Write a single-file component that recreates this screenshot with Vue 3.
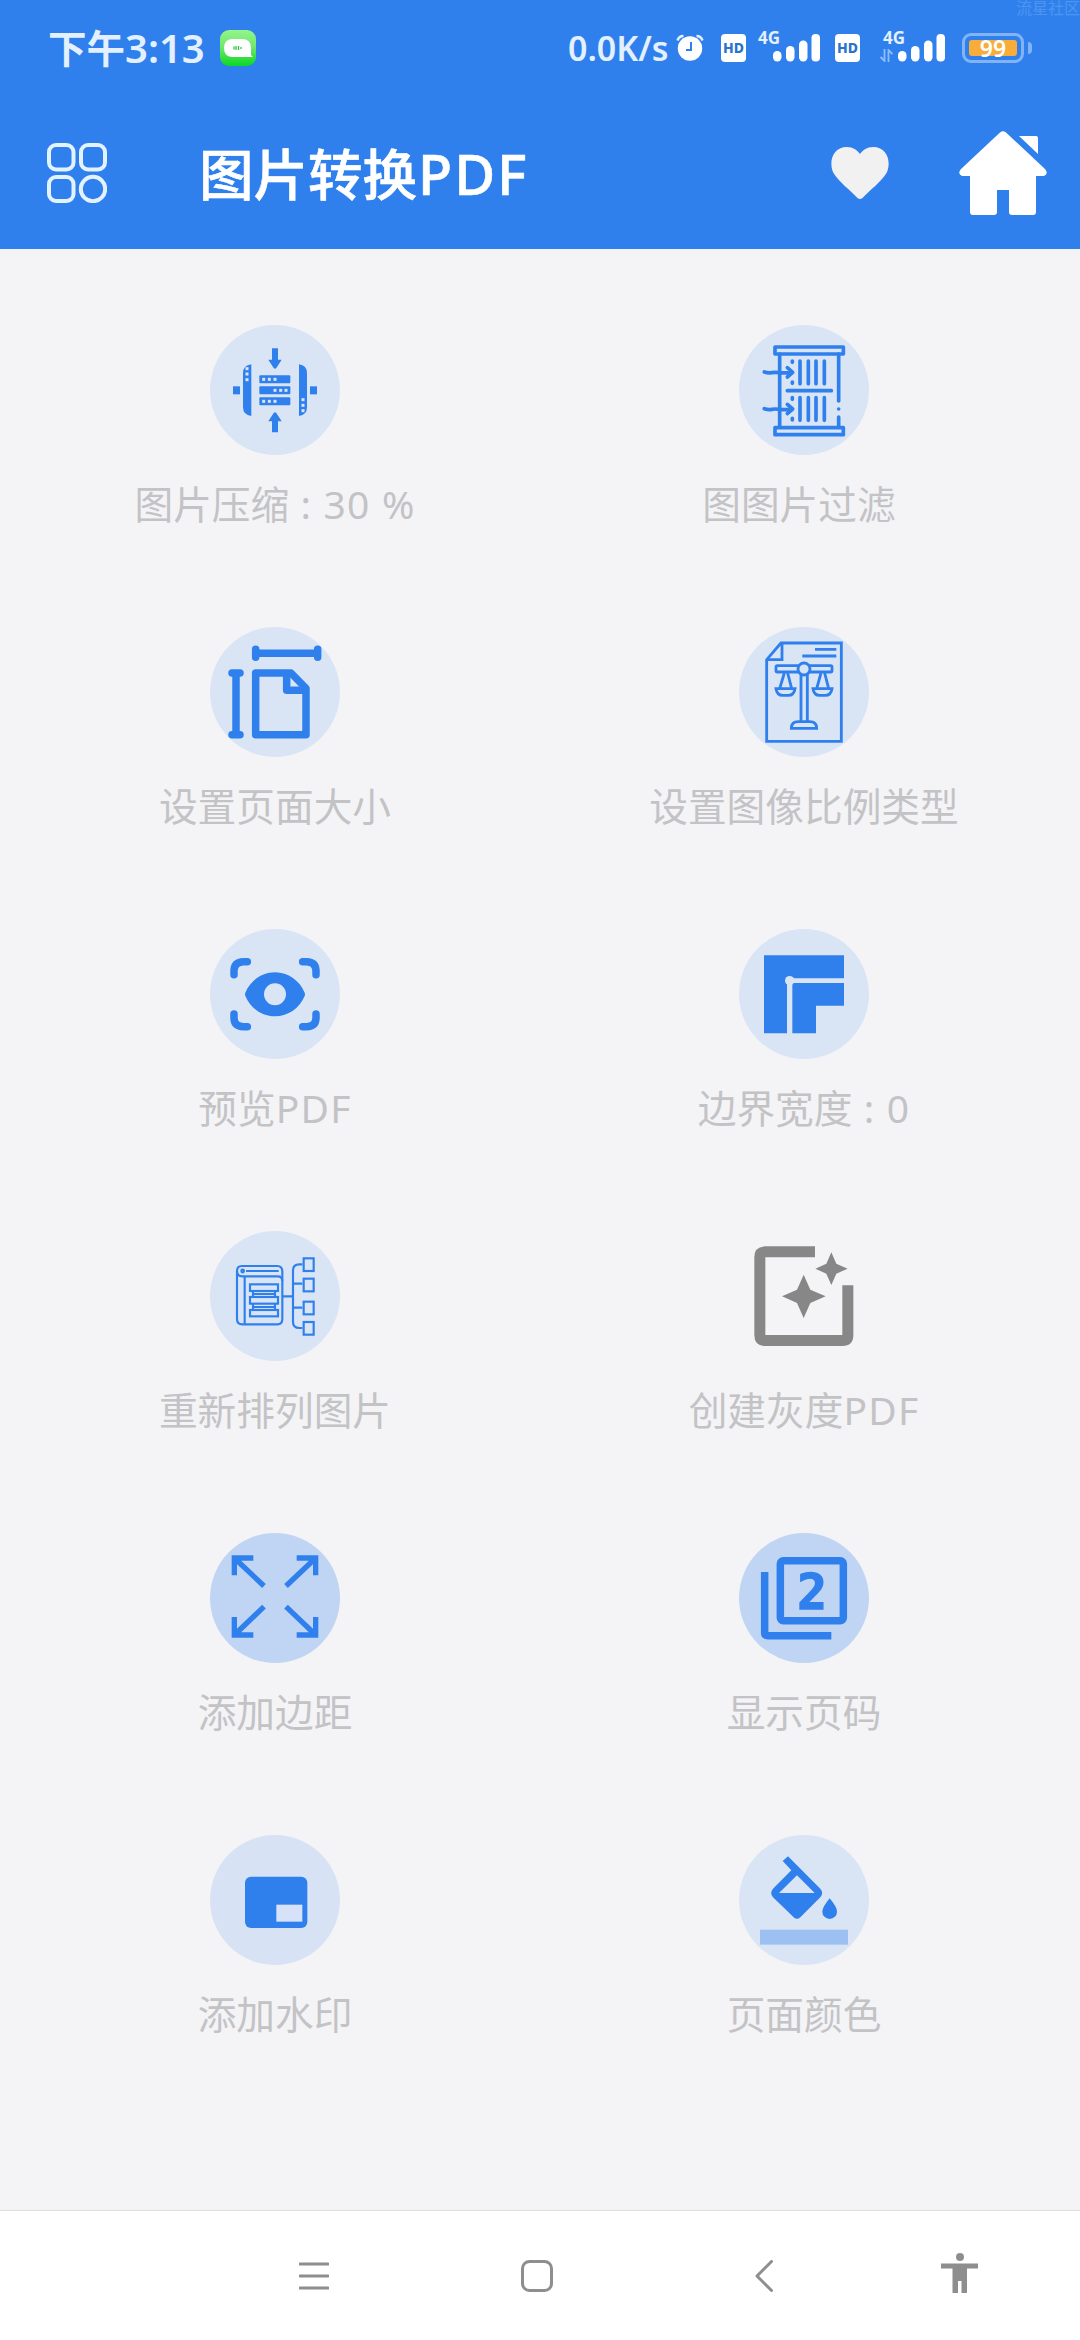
<script setup>
const tools = [
  { id: 'compress', label: [{ t: '图片压缩' }, { t: ' : 30 %', latin: true }] },
  { id: 'filter', label: [{ t: '图图片过滤 ' }] },
  { id: 'page-size', label: [{ t: '设置页面大小' }] },
  { id: 'scale', label: [{ t: '设置图像比例类型' }] },
  { id: 'preview', label: [{ t: '预览' }, { t: 'PDF', latin: true }] },
  { id: 'border', label: [{ t: '边界宽度' }, { t: ' : 0', latin: true }] },
  { id: 'reorder', label: [{ t: '重新排列图片' }] },
  { id: 'grayscale', label: [{ t: '创建灰度' }, { t: 'PDF', latin: true }] },
  { id: 'margin', label: [{ t: '添加边距' }] },
  { id: 'page-number', label: [{ t: '显示页码' }] },
  { id: 'watermark', label: [{ t: '添加水印' }] },
  { id: 'page-color', label: [{ t: '页面颜色' }] },
]

const dots = [
  // left plate
  [111, 131], [111, 147], [111, 164],
  // stacked drives
  [161, 163], [178, 163], [195, 163],
  [195, 196], [212, 196], [228, 196],
  [161, 229], [178, 229], [195, 229],
  // right plate
  [279, 224], [279, 241], [279, 257],
]
</script>

<template>
  <div class="screen">
    <header class="header">
      <div class="status">
        <span class="clock">下午<span class="clock-digits">3:13</span></span>
        <svg class="app-badge" width="36" height="36" viewBox="0 0 36 36">
          <defs>
            <linearGradient id="badge" x1="0" y1="0" x2="0" y2="1">
              <stop offset="0" stop-color="#93f58c" />
              <stop offset="0.45" stop-color="#72e86e" />
              <stop offset="1" stop-color="#0bd824" />
            </linearGradient>
          </defs>
          <rect width="36" height="36" rx="9" fill="url(#badge)" />
          <path d="M13 9h9q9 0 9 9v7l2 2H13q-9 0-9-9t9-9z" fill="#fff" />
          <path d="M14 16.500v3M16 16v4M18.500 16v4M21 17v2" stroke="#1fc437" stroke-width="1.200" />
        </svg>

        <span class="speed">0.0K/s</span>
        <svg class="alarm" width="28" height="28" viewBox="0 0 28 28">
          <circle cx="14" cy="14.500" r="12.200" fill="#fff" />
          <path d="M1.500 6.500Q3 2 7.500 2M26.500 6.500Q25 2 20.500 2" stroke="#e3f0ff" stroke-width="2.500" fill="none" />
          <path d="M15 8v8h-5" stroke="#2f80ed" stroke-width="2" fill="none" />
        </svg>
        <span class="hd">HD</span>
        <span class="signal">
          <span class="net">4G</span>
          <svg width="48" height="28" viewBox="0 0 48 28" fill="#fff">
            <rect x="0" y="17" width="8.500" height="10.500" rx="4.200" />
            <rect x="13" y="12" width="8.500" height="15.500" rx="4.200" />
            <rect x="26" y="6.500" width="8.500" height="21" rx="4.200" />
            <rect x="38.500" y="0" width="8.500" height="27.500" rx="4" />
          </svg>
        </span>
        <span class="hd hd-second">HD</span>
        <span class="signal signal-second">
          <span class="net">4G</span>
          <svg class="traffic" width="13" height="13" viewBox="0 0 13 13">
            <path d="M4.500 0v12L.5 8M8.500 13V1l4 4" fill="none" stroke="#8fbdf8" stroke-width="1.800" />
          </svg>
          <svg width="48" height="28" viewBox="0 0 48 28" fill="#fff">
            <rect x="0" y="17" width="8.500" height="10.500" rx="4.200" />
            <rect x="13" y="12" width="8.500" height="15.500" rx="4.200" />
            <rect x="26" y="6.500" width="8.500" height="21" rx="4.200" />
            <rect x="38.500" y="0" width="8.500" height="27.500" rx="4" />
          </svg>
        </span>
        <span class="battery"><span class="battery-level">99</span></span>
        <span class="battery-tip"></span>
        <span class="stamp">流星社区</span>
      </div>

      <div class="toolbar">
        <svg width="60" height="60" viewBox="0 0 60 60" fill="none" stroke="#e3f2ff" stroke-width="4">
          <rect x="2" y="2" width="24.500" height="24.500" rx="7" />
          <rect x="34" y="2" width="24" height="24.500" rx="7" />
          <rect x="2" y="34" width="24.500" height="24" rx="7" />
          <circle cx="46" cy="46" r="12.200" />
        </svg>
        <h1 class="title">图片转换<span class="title-latin">PDF</span></h1>
        <svg class="heart" width="58" height="52" viewBox="0 0 58 52">
          <path
            d="M26.500 51C20 44 7 34 2.500 26C-2.500 16 1 0 16 0C22 0 26 3 29 7C32 3 36 0 42 0C57 0 60.500 16 55.500 26C51 34 38 44 31.500 51Q29 53 26.500 51Z"
            fill="#f1f1f1"
          />
        </svg>
        <svg class="home" width="88" height="84" viewBox="0 0 88 84" fill="#fff">
          <path
            d="M41 1.500Q44 -1 47 1.500L86 38Q90 43 85 45H77V81Q77 84 74 84H53Q50 84 50 81V59H38V81Q38 84 35 84H14Q11 84 11 81V45H3Q-2 43 2 38Z"
          />
          <path d="M60 5h17q2 0 2 2v16z" />
        </svg>
      </div>
    </header>

    <main class="grid">
      <button v-for="tool in tools" :key="tool.id" type="button" class="tool">
        <svg class="icon" width="130" height="130" viewBox="0 0 390 390">
          <circle v-if="tool.id !== 'grayscale'" cx="195" cy="195" r="195" :class="['disc', `disc-${tool.id}`]" />

          <g v-if="tool.id === 'compress'" class="solid">
            <path d="M186 70h18v34h11l-16 25q-4 4-8 0l-16-25h11z" />
            <path d="M186 322h18v-33h11l-16-25q-4-4-8 0l-16 25h11z" />
            <path d="M124 118v155q-25-3-25-27V145q0-24 25-27z" />
            <path d="M267 118v155q24-3 24-27V145q0-24-24-27z" />
            <rect x="69" y="184" width="21" height="24" />
            <rect x="300" y="184" width="21" height="24" />
            <rect x="148" y="151" width="93" height="24" rx="3" />
            <rect x="148" y="184" width="93" height="24" rx="3" />
            <rect x="148" y="217" width="93" height="24" rx="3" />
            <rect v-for="([x, y], i) in dots" :key="i" :x="x - 4.5" :y="y - 4.5" width="9" height="9" class="dot" />
          </g>

          <g v-else-if="tool.id === 'filter'" class="line line-round">
            <rect x="108" y="66" width="205" height="21" />
            <rect x="108" y="308" width="205" height="21" />
            <path d="M122 87V306M299 87V228M299 252v.1M299 276V306M145 197H277" />
            <path d="M183 108V176M208 108V176M231 108V176M256 108V176" />
            <path d="M183 218V286M208 218V286M231 218V286M256 218V286" />
            <path d="M160 108v4M160 171v4M160 218v5M160 280v5" />
            <path d="M76 141Q88 145 98 143T122 143T158 142M145 128L161 142L145 156" />
            <path d="M76 251Q88 255 98 253T122 253T158 252M145 238L161 252L145 266" />
          </g>

          <g v-else-if="tool.id === 'page-size'" class="line line-bold line-round">
            <path d="M137 79H323M137 67V91M323 67V91M78 138V323M66 138H90M66 323H90" />
            <path d="M137 138H243L288 184V323H137Z" />
            <path d="M230 144V190H284" />
          </g>

          <g v-else-if="tool.id === 'scale'" class="line line-thin">
            <path d="M126 48H307V343H83V98Z" />
            <path d="M129 48V98H83M228 67H292M190 87H292" />
            <path d="M186 142V282M205 142V282" />
            <rect x="111" y="116" width="168" height="19" rx="4" />
            <circle cx="195" cy="126" r="18" fill="#d9e5f5" />
            <path d="M157 304Q157 284 178 284H212Q233 284 233 304Z" />
            <path d="M136 138L122 185M146 138L158 185M111 185H168Q165 205 148 205H131Q114 205 111 185Z" />
            <path d="M246 138L233 185M257 138L269 185M222 185H279Q276 205 259 205H242Q225 205 222 185Z" />
          </g>

          <g v-else-if="tool.id === 'preview'">
            <path
              class="line line-bold line-round"
              d="M72 137V124Q73 99 100 98H112M278 98H290Q317 99 318 124V137M318 255V268Q317 292 290 293H278M112 293H100Q73 292 72 268V255"
            />
            <path
              class="solid"
              fill-rule="evenodd"
              d="M106 191C121 155 155 130 195 130S269 155 284 191Q286 196 284 201C269 237 235 262 195 262S121 237 106 201Q104 196 106 191ZM195 163A33 33 0 1 0 195 229A33 33 0 1 0 195 163Z"
            />
          </g>

          <g v-else-if="tool.id === 'border'" class="solid">
            <path d="M75 79H315V148H144V313H75Z" />
            <path d="M160 162H315V230H231V313H160Z" />
            <circle cx="152" cy="155" r="14" fill="#d9e5f5" />
          </g>

          <g v-else-if="tool.id === 'reorder'" class="line line-fine">
            <path d="M95 105H202Q217 105 217 122V264Q217 280 202 280H97Q81 280 81 264V120Q81 105 95 105Z" />
            <path d="M81 120Q81 136 97 136H203Q217 136 217 150M108 120H206M104 136V280" />
            <circle cx="98" cy="120" r="4" />
            <rect x="120" y="160" width="84" height="20" />
            <rect x="120" y="198" width="84" height="20" />
            <rect x="120" y="237" width="84" height="19" />
            <path d="M129 180V198M195 180V198M129 218V237M195 218V237M129 189H195M129 228H195" />
            <path d="M217 196H249M277 100H268Q249 100 249 118V273Q249 291 268 291H277M249 158H277M249 230H277" />
            <rect x="281" y="82" width="30" height="38" />
            <rect x="281" y="143" width="30" height="38" />
            <rect x="281" y="212" width="30" height="38" />
            <rect x="281" y="273" width="30" height="38" />
          </g>

          <g v-else-if="tool.id === 'grayscale'" class="gray">
            <path
              d="M228 46V79H79V312H310V163H343V312Q343 345 310 345H79Q46 345 46 312V79Q46 46 79 46Z"
            />
            <path d="M194 131L214 176L260 196L214 216L194 261L174 216L129 196L174 176Z" />
            <path d="M277 64L292 98L326 113L292 128L277 162L262 128L229 113L262 98Z" />
          </g>

          <g v-else-if="tool.id === 'margin'" class="line line-arrow">
            <path d="M130 75H73V127M73 75L162 159" />
            <path d="M260 75H317V127M317 75L228 159" />
            <path d="M130 306H73V252M73 306L162 221" />
            <path d="M260 306H317V252M317 306L228 221" />
          </g>

          <g v-else-if="tool.id === 'page-number'">
            <rect class="line line-bold" x="124" y="83" width="189" height="180" rx="9" />
            <path class="line line-bold" d="M77 117V299Q77 308 86 308H277" />
            <text x="219" y="228" class="digit">2</text>
          </g>

          <g v-else-if="tool.id === 'watermark'" class="solid">
            <rect x="105" y="125" width="187" height="154" rx="18" />
            <rect x="199" y="209" width="78" height="51" fill="#d5e2f7" />
          </g>

          <g v-else>
            <path
              class="solid"
              fill-rule="evenodd"
              d="M147 64L244 161Q255 174 244 187L184 247Q174 256 164 247L102 187Q91 174 102 161L157 106L131 78ZM174 121L120 174H227Z"
            />
            <path class="solid" d="M272 190Q294 216 294 230A22 22 0 0 1 250 230Q250 216 272 190Z" />
            <rect x="63" y="284" width="264" height="45" fill="#9bc0f1" />
          </g>
        </svg>
        <span class="label"><span
          v-for="part in tool.label"
          :key="part.t"
          :class="{ 'label-latin': part.latin }"
        >{{ part.t }}</span></span>
      </button>
    </main>

    <nav class="nav">
      <svg class="nav-menu" width="30" height="28" viewBox="0 0 30 28">
        <path d="M1 2H29M1 14H29M1 26H29" />
      </svg>
      <svg class="nav-home" width="32" height="32" viewBox="0 0 32 32">
        <rect x="1.500" y="1.500" width="29" height="29" rx="7" />
      </svg>
      <svg class="nav-back" width="18" height="32" viewBox="0 0 18 32">
        <path d="M16.500 1.500L2 16L16.500 30.500" />
      </svg>
      <svg class="nav-access" width="37" height="41" viewBox="0 0 37 41">
        <circle cx="19" cy="4" r="4" />
        <path d="M0 10.500H37V15.500H26V40H20.500V28H17V40H11.500V15.500H0Z" />
      </svg>
    </nav>
  </div>
</template>

<style>
body {
  margin: 0;
}
</style>

<style scoped>
.screen {
  width: 1080px;
  height: 2340px;
  display: flex;
  flex-direction: column;
  overflow: hidden;
  background: #f4f4f7;
  font-family: "Noto Sans", "Noto Sans CJK SC", sans-serif;
}

.header {
  height: 249px;
  background: #2f80ed;
  color: #fff;
}

.status {
  position: relative;
  display: flex;
  align-items: center;
  height: 96px;
  padding-left: 48px;
  color: #e3f0ff;
  white-space: nowrap;
}

.clock {
  display: flex;
  align-items: baseline;
  width: 172px;
  font-size: 38.5px;
  line-height: 56px;
  font-weight: 700;
}

.clock-digits {
  font-size: 40px;
  font-weight: 600;
}

.speed {
  width: 107px;
  margin-left: 312px;
  font-size: 34px;
  font-weight: 600;
  line-height: 48px;
}

.alarm {
  margin-left: 1px;
}

.hd {
  width: 25px;
  height: 28px;
  margin-left: 17px;
  border-radius: 4px;
  background: #fff;
  color: #2a72cf;
  font-size: 14px;
  font-weight: 800;
  line-height: 28px;
  text-align: center;
}

.signal {
  position: relative;
  display: flex;
  margin-left: 27px;
}

.net {
  position: absolute;
  left: -15px;
  top: -5px;
  font-size: 17px;
  font-weight: 700;
  line-height: 17px;
}

.traffic {
  position: absolute;
  left: -18px;
  top: 15px;
}

.hd-second {
  margin-left: 14px;
}

.signal-second {
  margin-left: 38px;
}

.battery {
  box-sizing: border-box;
  width: 62px;
  height: 30px;
  margin-left: 16px;
  padding: 4px;
  border: 3px solid #82b3f5;
  border-radius: 9px;
}

.battery-level {
  display: block;
  height: 16px;
  border-radius: 3px;
  background: #f8ac3a;
  color: #fff;
  font-size: 23px;
  font-weight: 600;
  line-height: 17px;
  text-align: center;
}

.battery-tip {
  width: 4px;
  height: 12px;
  margin-left: 4px;
  border-radius: 0 4px 4px 0;
  background: #82b3f5;
}

.stamp {
  position: absolute;
  right: 0;
  top: 0;
  color: #4c96f0;
  font-size: 16px;
  line-height: 16px;
}

.toolbar {
  display: flex;
  align-items: center;
  height: 153px;
  padding-left: 47px;
}

.title {
  display: flex;
  align-items: baseline;
  width: 632px;
  margin: 2px 0 0 92px;
  font-size: 54.5px;
  font-weight: 500;
  line-height: 80px;
  -webkit-text-stroke: 0.6px #fff;
}

.title-latin {
  margin-left: 1px;
  font-size: 56px;
  letter-spacing: 2px;
}

.home {
  margin-left: 70px;
}

.grid {
  flex: 1;
  display: grid;
  grid-template-columns: 529px 529px;
  grid-auto-rows: 302px;
  align-content: start;
  padding: 76px 0 0 10.5px;
}

.tool {
  display: flex;
  flex-direction: column;
  align-items: center;
  padding: 0;
  border: 0;
  background: none;
  font-family: inherit;
}

.icon {
  flex: none;
}

.label {
  margin-top: 21px;
  color: #c3c3c6;
  font-size: 38.7px;
  line-height: 56px;
  white-space: pre;
}

.label-latin {
  font-size: 39px;
  letter-spacing: 1.2px;
}

.disc {
  fill: #d9e5f5;
}

.disc-margin,
.disc-page-number {
  fill: #c0d5f4;
}

.disc-watermark {
  fill: #d7e3f4;
}

.solid {
  fill: #2f80ed;
}

.dot {
  fill: #d9e5f5;
}

.gray {
  fill: #878787;
}

.line {
  fill: none;
  stroke: #2f80ed;
  stroke-width: 11;
}

.line-round {
  stroke-linecap: round;
  stroke-linejoin: round;
}

.line-bold {
  stroke-width: 22.5;
}

.line-thin {
  stroke-width: 8.5;
}

.line-fine {
  stroke-width: 6.5;
}

.line-arrow {
  stroke-width: 16;
}

.digit {
  fill: #2f80ed;
  stroke: #2f80ed;
  stroke-width: 4px;
  font-family: "DejaVu Sans Mono", monospace;
  font-size: 148px;
  font-weight: 700;
  text-anchor: middle;
}

.nav {
  display: flex;
  align-items: center;
  height: 129px;
  border-top: 1px solid #dedee0;
  background: #fff;
  fill: none;
  stroke: #8e8e8e;
  stroke-width: 3;
  stroke-linecap: round;
  stroke-linejoin: round;
}

.nav-menu {
  margin-left: 299px;
}

.nav-home {
  margin-left: 192px;
}

.nav-back {
  margin-left: 202px;
}

.nav-access {
  margin: -4px 0 0 168px;
  fill: #8e8e8e;
  stroke: none;
}
</style>
